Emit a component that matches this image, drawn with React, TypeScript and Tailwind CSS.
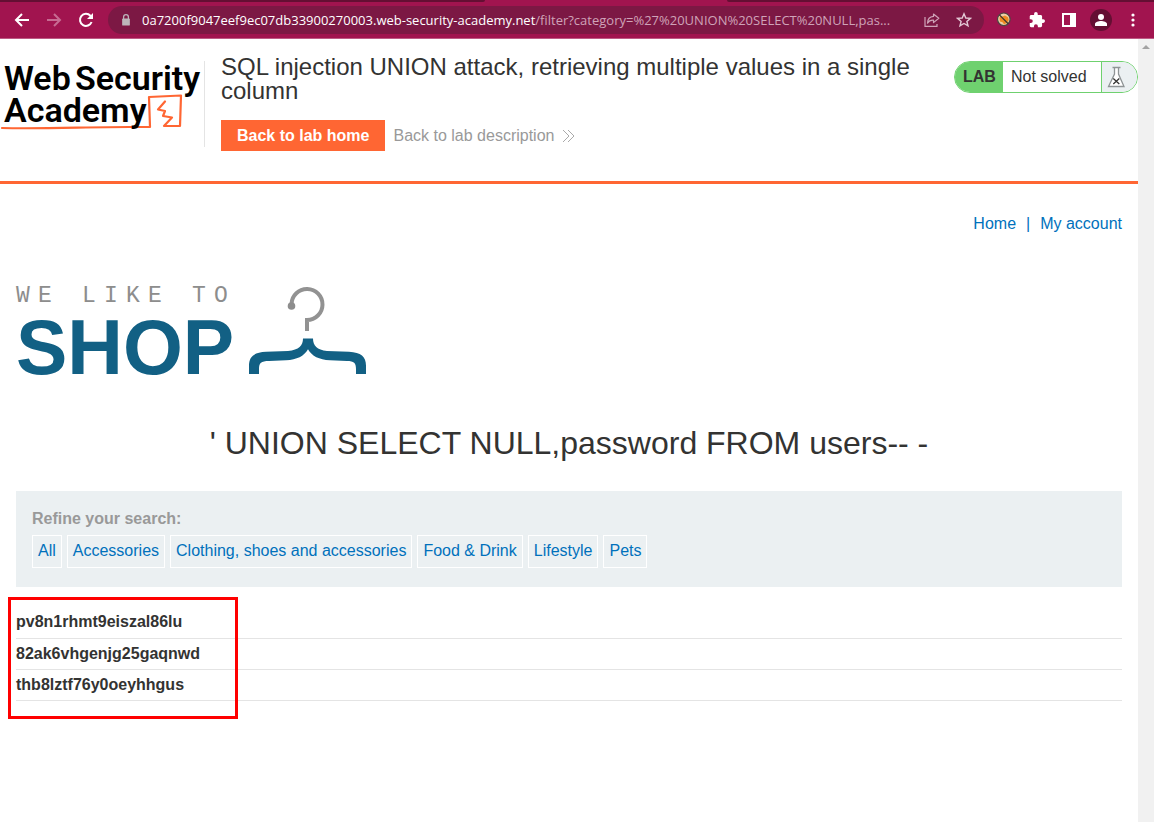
import React from 'react';

const categories = ['All', 'Accessories', 'Clothing, shoes and accessories', 'Food & Drink', 'Lifestyle', 'Pets'];
const results = ['pv8n1rhmt9eiszal86lu', '82ak6vhgenjg25gaqnwd', 'thb8lztf76y0oeyhhgus'];

function BrowserBar() {
  return (
    <header className="bg-[#a1144f] border-b border-[#bd5a84]">
      <div className="flex h-[2px]">
        <div className="w-[42%] bg-[#640f33] rounded-br" />
        <div className="w-[21%]" />
        <div className="flex-1 bg-[#640f33] rounded-bl" />
      </div>
      <div className="flex items-center h-9 pl-3 pr-[13px]">
        <button aria-label="Back" className="w-5 h-5 text-white">
          <svg viewBox="0 0 20 20" className="w-5 h-5" fill="none" stroke="currentColor" strokeWidth="2">
            <path d="M17 10H4.5M10 4L4 10l6 6" />
          </svg>
        </button>
        <button aria-label="Forward" className="w-5 h-5 ml-3 text-[#c76b92]">
          <svg viewBox="0 0 20 20" className="w-5 h-5" fill="none" stroke="currentColor" strokeWidth="2">
            <path d="M3 10h12.5M10 4l6 6-6 6" />
          </svg>
        </button>
        <button aria-label="Reload" className="w-5 h-5 ml-3 text-white">
          <svg viewBox="0 0 20 20" className="w-5 h-5" fill="none" stroke="currentColor" strokeWidth="2">
            <path d="M15.6 12a6 6 0 1 1-1.2-6.2l1 1" />
            <path d="M17 3v6h-6z" fill="currentColor" stroke="none" />
          </svg>
        </button>
        <div className="flex flex-1 min-w-0 items-center h-7 ml-3 pl-3 pr-3 rounded-full bg-[#7c1844]">
          <svg viewBox="0 0 12 14" className="w-3 h-3 shrink-0" aria-hidden="true">
            <path d="M3.2 6V3.6a2.8 2.8 0 0 1 5.6 0V6" fill="none" stroke="#bdb5ba" strokeWidth="1.5" />
            <rect x="1.5" y="5.2" width="9" height="8.3" rx="1" fill="#bdb5ba" />
          </svg>
          <div className="flex-1 min-w-0 ml-[10px] overflow-hidden whitespace-nowrap text-[13px] leading-5 text-[#cfa3b8] font-['Open_Sans',sans-serif]">
            <span className="text-white">0a7200f9047eef9ec07db33900270003.web-security-academy.net</span>/filter?category=%27%20UNION%20SELECT%20NULL,pas...
          </div>
          <button aria-label="Share" className="w-4 h-4 ml-3 shrink-0 text-[#cfa3b8]">
            <svg viewBox="0 0 16 16" className="w-4 h-4" fill="none" stroke="currentColor" strokeWidth="1.2">
              <path d="M1 5v9.400h12V12" />
              <path d="M9.500 2l5.300 4.300-5.300 4.300V8.200C6.600 8 4.700 9 3.500 11.200 3.600 7.500 5.600 4.700 9.500 4.400z" strokeLinejoin="round" />
            </svg>
          </button>
          <button aria-label="Bookmark" className="w-4 h-4 ml-4 shrink-0 text-[#e3c8d5]">
            <svg viewBox="0 0 16 16" className="w-4 h-4" fill="none" stroke="currentColor" strokeWidth="1.4">
              <path d="M8 1.800l1.800 4.200 4.600.4-3.500 3 1.100 4.500L8 11.500l-4 2.400 1.100-4.500-3.500-3 4.600-.4z" />
            </svg>
          </button>
        </div>
        <button aria-label="FoxyProxy" className="w-4 h-4 ml-[12px] shrink-0">
          <svg viewBox="0 0 16 16" className="w-4 h-4">
            <circle cx="7.800" cy="7.300" r="6.300" fill="#ecd0a8" stroke="#4a4540" strokeWidth="1.200" />
            <path d="M3.500 6l1-2 2 .6 2.500-1 3 1.600.8 2.800-1.800 3-3 1.200-1.500-2-2.500-.8z" fill="#ee8a22" />
            <path d="M3.400 2.900l8.800 8.800" stroke="#3b352f" strokeWidth="1.300" />
          </svg>
        </button>
        <button aria-label="Extensions" className="w-4 h-4 ml-[17px] text-white">
          <svg viewBox="1 1 22 22" className="w-4 h-4" fill="currentColor">
            <path d="M20.500 11H19V7c0-1.100-.9-2-2-2h-4V3.500a2.500 2.500 0 0 0-5 0V5H4c-1.100 0-2 .9-2 2v3.800h1.500a2.700 2.700 0 0 1 0 5.400H2V20c0 1.100.9 2 2 2h3.800v-1.500a2.700 2.700 0 0 1 5.400 0V22H17c1.100 0 2-.9 2-2v-4h1.500a2.500 2.500 0 0 0 0-5z" />
          </svg>
        </button>
        <button aria-label="Side panel" className="w-4 h-4 ml-4 text-white">
          <svg viewBox="0 0 16 16" className="w-4 h-4">
            <path d="M1 1h14v14H1zM3 3v10h6V3z" fill="currentColor" fillRule="evenodd" />
          </svg>
        </button>
        <button aria-label="Profile" className="w-[22px] h-[22px] ml-[13px] rounded-full bg-[#640f33] text-white">
          <svg viewBox="0 0 22 22" className="w-[22px] h-[22px]" fill="currentColor">
            <circle cx="11" cy="8" r="3" />
            <path d="M5 17v-2c0-2 3.500-3 6-3s6 1 6 3v2z" />
          </svg>
        </button>
        <button aria-label="Menu" className="w-4 h-4 ml-[13px] text-white">
          <svg viewBox="0 0 16 16" className="w-4 h-4" fill="currentColor">
            <circle cx="8" cy="3" r="1.600" />
            <circle cx="8" cy="8" r="1.600" />
            <circle cx="8" cy="13" r="1.600" />
          </svg>
        </button>
      </div>
    </header>
  );
}

function AcademyLogo() {
  return (
    <svg viewBox="0 0 204 86" className="w-[204px] h-[86px] shrink-0 overflow-visible" role="img" aria-label="Web Security Academy">
      <path d="M2 67c40 1 85-1 127-1h21l-1-30 32-1.500-1 30.500h-16l8-8.500-9-1.500 2-5-7-1.500 7-8" fill="none" stroke="#ff6633" strokeWidth="2.200" strokeLinecap="round" strokeLinejoin="round" />
      <g fill="#000" fontFamily="Roboto, sans-serif" fontSize="34" fontWeight="600">
        <text x="4" y="29">Web</text>
        <text x="75" y="29">Security</text>
        <text x="4" y="61">Academy</text>
      </g>
    </svg>
  );
}

function ShopLogo() {
  return (
    <div className="flex items-start">
      <div>
        <p className="text-[23px] leading-6 text-[#8d8d8d] font-['Liberation_Mono',monospace]">
          {'WE LIKE TO'.split('').map((letter, i) => (
            <span key={i} className="inline-block w-[22px] whitespace-pre">{letter}</span>
          ))}
        </p>
        <p className="text-[77px] leading-[78px] font-bold text-[#126084]">SHOP</p>
      </div>
      <svg viewBox="0 0 120 92" className="w-[120px] h-[92px] ml-[13px]" aria-hidden="true">
        <path d="M42.500 20A15.500 15.500 0 1 1 58 36v11" fill="none" stroke="#929292" strokeWidth="4" />
        <circle cx="42.500" cy="22" r="3.800" fill="#8d8d8d" />
        <path d="M54 54.500h10c0 7 4 11.500 14 12.500l22 .7c12 .5 17 5 17 14V90h-10v-5c0-6-2-8-9-8l-17-.7c-11-.6-18-4-22-11-4 7-11 10.400-22 11l-17 .7c-8 0-10 2-10 8v5H0v-8.300c0-9 5-13.500 17-14l22-.7c11-1 15-5.500 15-12.500z" fill="#126084" />
      </svg>
    </div>
  );
}

function LabStatus() {
  return (
    <div className="flex h-8 mt-[22px] shrink-0 rounded-full border border-[#6fd16f] overflow-hidden bg-white leading-[30px]">
      <p className="w-12 pl-2 font-bold bg-[#6fd16f]">LAB</p>
      <p className="w-[99px] pl-2 border-r border-[#6fd16f]">Not solved</p>
      <div className="w-[35px] pl-1 pt-1 bg-[#ebf0f2]">
        <svg viewBox="0 0 20 22" className="w-5 h-[22px]" fill="none" stroke="#8f9496" aria-hidden="true">
          <path d="M6.500 1.500h8M8.500 2v6L2.500 20.500h15.500L12.500 8V2" fill="#fff" strokeWidth="1.300" />
          <path d="M7.300 12.500l6 5.500M13.300 12.500l-6 5.500" stroke="#333332" strokeWidth="1.300" />
        </svg>
      </div>
    </div>
  );
}

export default function App() {
  return (
    <div className="flex flex-col min-h-screen bg-white text-base text-[#333332] font-['Liberation_Sans',Arial,sans-serif]">
      <BrowserBar />
      <div className="flex flex-1">
        <div className="flex-1 min-w-0">
          <section className="flex items-start h-[145px] border-b-[3px] border-[#ff6633]">
            <div className="mt-[22px] border-r border-[#e4e4e4]">
              <AcademyLogo />
            </div>
            <div className="flex-1 min-w-0 pl-4 pr-7 pt-4">
              <h2 className="text-2xl leading-6">SQL injection UNION attack, retrieving multiple values in a single column</h2>
              <div className="flex items-center mt-[17px]">
                <a href="#home" className="h-[31px] px-4 leading-[31px] font-bold text-white bg-[#ff6633]">Back to lab home</a>
                <a href="#description" className="flex items-center ml-2 text-[#999999]">
                  Back to lab description
                  <svg viewBox="0 0 14 14" className="w-[14px] h-[14px] ml-2" fill="none" stroke="#aaaaaa" aria-hidden="true">
                    <path d="M1 1l6 6-6 6M6 1l6 6-6 6" />
                  </svg>
                </a>
              </div>
            </div>
            <LabStatus />
          </section>

          <main className="px-4">
            <nav className="flex justify-end gap-[10px] pt-7 leading-6 text-[#0071bc]">
              <a href="#shop">Home</a>
              <span>|</span>
              <a href="#account">My account</a>
            </nav>
            <div className="pt-12">
              <ShopLogo />
            </div>
            <h1 className="mt-[37px] text-center text-[32px] leading-10">' UNION SELECT NULL,password FROM users-- -</h1>
            <section className="mt-7 h-24 px-4 pt-4 bg-[#ebf0f2]">
              <p className="leading-6 font-bold text-[#999999]">Refine your search:</p>
              <div className="flex flex-wrap gap-[5px] mt-1 text-[#0071bc]">
                {categories.map((name) => (
                  <a key={name} href="#category" className="h-[33px] px-[5px] leading-[30px] border border-white">{name}</a>
                ))}
              </div>
            </section>
            <div className="relative pt-5">
              <table className="w-full text-left">
                <tbody>
                  {results.map((value) => (
                    <tr key={value} className="border-b border-[#e4e4e4]">
                      <th scope="row" className="h-[31px] font-bold">{value}</th>
                    </tr>
                  ))}
                </tbody>
              </table>
              <div className="absolute -left-2 top-[10px] w-[230px] h-[122px] border-[3px] border-[#ff0000]" />
            </div>
          </main>
        </div>
        <div className="flex justify-center w-4 pt-[6px] bg-[#f1f1f1]">
          <svg viewBox="0 0 8 4" className="w-2 h-1" aria-hidden="true">
            <path d="M4 0l4 4H0z" fill="#a3a3a3" />
          </svg>
        </div>
      </div>
    </div>
  );
}
